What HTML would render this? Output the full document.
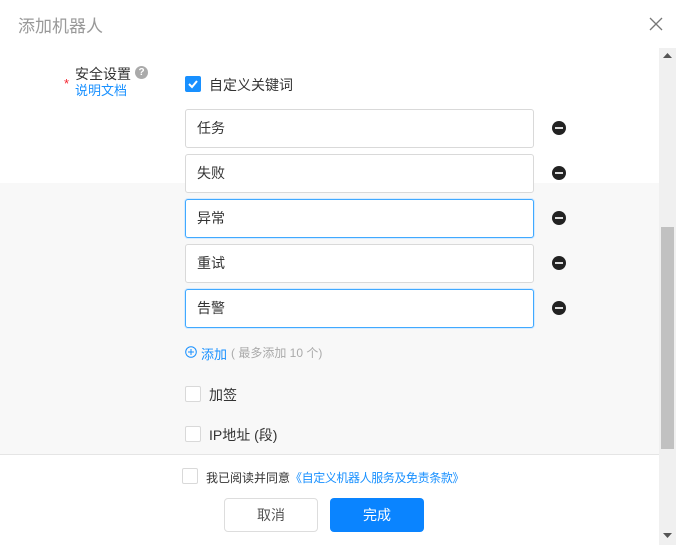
<!DOCTYPE html>
<html><head><meta charset="utf-8"><style>
*{box-sizing:border-box;margin:0;padding:0}
body{width:676px;height:545px;overflow:hidden;background:#fff;font-family:"Liberation Sans","Noto Sans CJK SC",sans-serif;font-size:14px;color:#333;position:relative}
.abs{position:absolute}
.title{left:18px;top:12px;font-size:17px;color:#999}
.gray{left:0;top:183px;width:659px;height:271px;background:#f8f8f8}
.sb{left:659px;top:48px;width:17px;height:497px;background:#f0f0f0}
.thumb{left:661px;top:227px;width:13px;height:222px;background:#c1c1c1}
.inp{left:185px;width:349px;height:39px;border:1px solid #d9d9d9;border-radius:3px;background:#fff;padding:0 11px;line-height:37px;font-size:14px;color:#333}
.inp.f{border-color:#40a9ff;box-shadow:0 0 0 1px #d6ebff}
.minus{left:552px;width:14px;height:14px;border-radius:50%;background:#222}
.minus:after{content:"";position:absolute;left:3px;top:6px;width:8px;height:2px;background:#ddd}
.cb{width:16px;height:16px;border:1px solid #d9d9d9;border-radius:2px;background:#fff}
.btn{top:498px;height:34px;border-radius:4px;text-align:center;line-height:32px;font-size:14px}
</style></head><body>
<div class="abs title">添加机器人</div>
<svg class="abs" style="left:649px;top:17px" width="14" height="14"><path d="M1 1L13 13M13 1L1 13" stroke="#777" stroke-width="1.3"/></svg>
<div class="abs gray"></div>
<div class="abs sb"></div>
<div class="abs thumb"></div>
<svg class="abs" style="left:663px;top:53px" width="9" height="6"><path d="M0 5L4.5 0L9 5Z" fill="#555"/></svg>
<svg class="abs" style="left:663px;top:533px" width="9" height="6"><path d="M0 0L4.5 5L9 0Z" fill="#555"/></svg>
<div class="abs" style="left:64px;top:76px;color:#f5222d;font-size:13px">*</div>
<div class="abs" style="left:75px;top:64px;font-size:14px;color:#333">安全设置</div>
<div class="abs" style="left:135px;top:66px;width:13px;height:13px;border-radius:50%;background:#aaa;color:#fff;font-size:10px;line-height:13px;text-align:center;font-weight:bold">?</div>
<div class="abs" style="left:75px;top:80px;font-size:13px;color:#1890ff">说明文档</div>
<div class="abs" style="left:185px;top:76px;width:16px;height:16px;border-radius:2px;background:#1890ff"></div>
<svg class="abs" style="left:187px;top:78px" width="12" height="12"><path d="M2 6L5 9L10 3" stroke="#fff" stroke-width="2" fill="none"/></svg>
<div class="abs" style="left:209px;top:75px">自定义关键词</div>
<div class="abs inp" style="top:109px">任务</div>
<div class="abs inp" style="top:154px">失败</div>
<div class="abs inp f" style="top:199px">异常</div>
<div class="abs inp" style="top:244px">重试</div>
<div class="abs inp f" style="top:289px">告警</div>
<div class="abs minus" style="top:121px"></div>
<div class="abs minus" style="top:166px"></div>
<div class="abs minus" style="top:211px"></div>
<div class="abs minus" style="top:256px"></div>
<div class="abs minus" style="top:301px"></div>
<svg class="abs" style="left:185px;top:346px" width="12" height="12"><circle cx="6" cy="6" r="5.3" fill="none" stroke="#1890ff" stroke-width="1"/><path d="M3 6H9M6 3V9" stroke="#1890ff"/></svg>
<div class="abs" style="left:201px;top:344px;font-size:13px;color:#1890ff">添加</div>
<div class="abs" style="left:231px;top:344px;font-size:12px;color:#aaa">( 最多添加 10 个)</div>
<div class="abs cb" style="left:185px;top:386px"></div>
<div class="abs" style="left:209px;top:385px">加签</div>
<div class="abs cb" style="left:185px;top:426px"></div>
<div class="abs" style="left:209px;top:425px">IP地址 (段)</div>
<div class="abs" style="left:0;top:454px;width:659px;height:1px;background:#e5e5e5"></div>
<div class="abs cb" style="left:182px;top:468px"></div>
<div class="abs" style="left:206px;top:469px;font-size:12px">我已阅读并同意<span style="color:#1890ff;letter-spacing:-0.4px">《自定义机器人服务及免责条款》</span></div>
<div class="abs btn" style="left:224px;width:94px;border:1px solid #ddd;color:#555;background:#fff">取消</div>
<div class="abs btn" style="left:330px;width:94px;background:#0a84ff;color:#fff;line-height:34px">完成</div>
</body></html>
